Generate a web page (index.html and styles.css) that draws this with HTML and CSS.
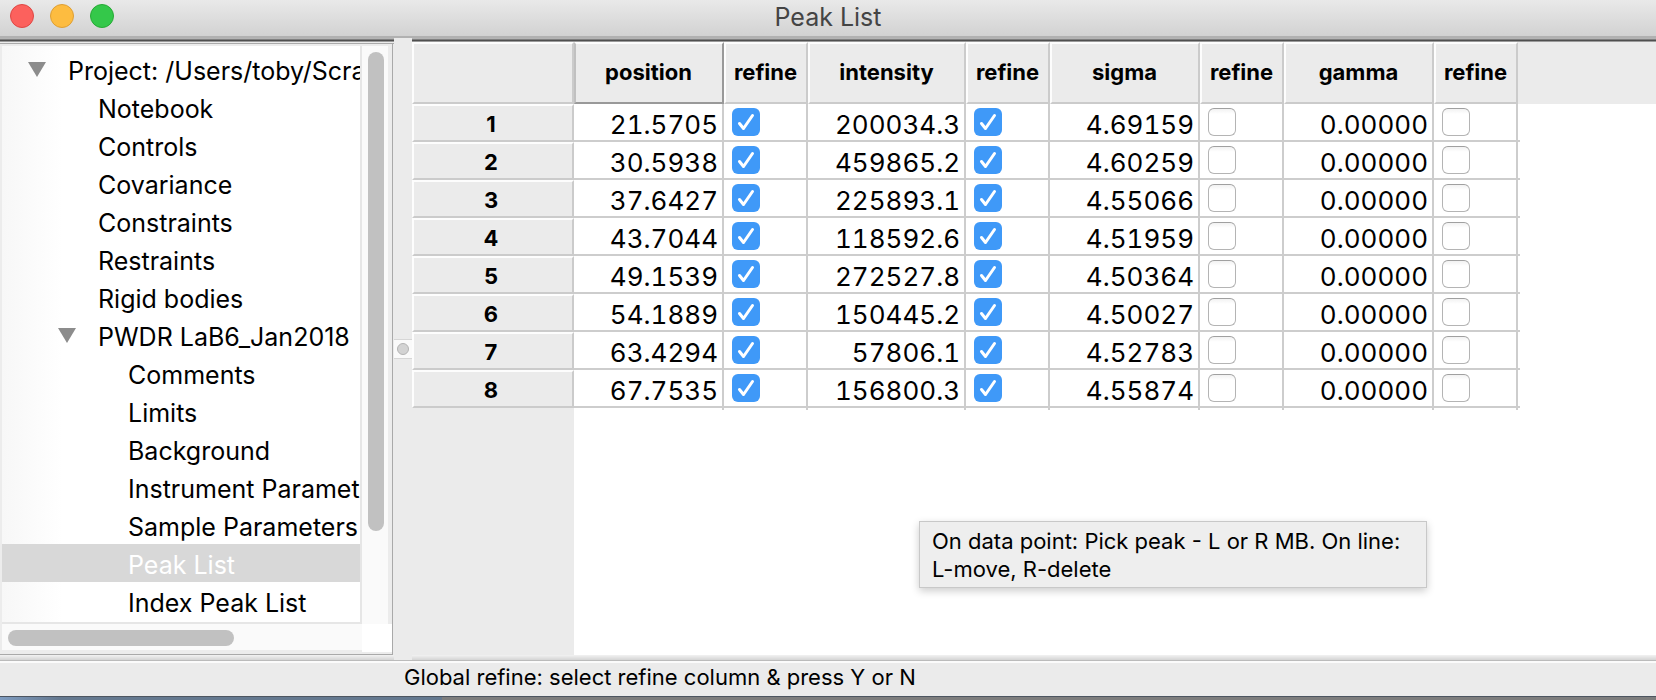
FILE: index.html
```html
<!DOCTYPE html>
<html lang="en">
<head>
<meta charset="utf-8">
<title>Peak List</title>
<link rel="stylesheet" href="styles.css">
</head>
<body>
<div class="window">
  <header class="titlebar">
    <div class="lights">
      <button class="light close" aria-label="Close"></button>
      <button class="light minimize" aria-label="Minimize"></button>
      <button class="light zoom" aria-label="Zoom"></button>
    </div>
    <h1 class="title">Peak List</h1>
  </header>
  <main class="content">
    <aside class="sidebar">
      <div class="tree-row">
        <ul class="tree">
          <li class="node"><svg class="arrow" viewBox="0 0 18 15"><path d="M0 0H18L9 15Z"/></svg>Project: /Users/toby/Scra</li>
          <li class="node level-1">Notebook</li>
          <li class="node level-1">Controls</li>
          <li class="node level-1">Covariance</li>
          <li class="node level-1">Constraints</li>
          <li class="node level-1">Restraints</li>
          <li class="node level-1">Rigid bodies</li>
          <li class="node level-1"><svg class="arrow" viewBox="0 0 18 15"><path d="M0 0H18L9 15Z"/></svg>PWDR LaB6_Jan2018</li>
          <li class="node level-2">Comments</li>
          <li class="node level-2">Limits</li>
          <li class="node level-2">Background</li>
          <li class="node level-2">Instrument Paramet</li>
          <li class="node level-2">Sample Parameters</li>
          <li class="node level-2 selected">Peak List</li>
          <li class="node level-2">Index Peak List</li>
        </ul>
        <div class="vtrack"><div class="vthumb"></div></div>
      </div>
      <div class="htrack-row">
        <div class="htrack"><div class="hthumb"></div></div>
        <div class="corner"></div>
      </div>
    </aside>
    <div class="splitter"><div class="grip"><span class="knob"></span></div></div>
    <section class="sheet">
      <table class="grid">
        <colgroup>
          <col class="col-label"><col class="col-value"><col class="col-refine"><col class="col-intensity"><col class="col-refine"><col class="col-value"><col class="col-refine"><col class="col-value"><col class="col-refine">
        </colgroup>
        <thead>
          <tr><td class="blank"></td><th class="current">position</th><th>refine</th><th>intensity</th><th>refine</th><th>sigma</th><th>refine</th><th>gamma</th><th>refine</th></tr>
        </thead>
        <tbody>
          <tr><th>1</th><td>21.5705</td><td class="tick"><input type="checkbox" aria-label="Refine position 1" checked></td><td>200034.3</td><td class="tick"><input type="checkbox" aria-label="Refine intensity 1" checked></td><td>4.69159</td><td class="tick"><input type="checkbox" aria-label="Refine sigma 1"></td><td>0.00000</td><td class="tick"><input type="checkbox" aria-label="Refine gamma 1"></td></tr>
          <tr><th>2</th><td>30.5938</td><td class="tick"><input type="checkbox" aria-label="Refine position 2" checked></td><td>459865.2</td><td class="tick"><input type="checkbox" aria-label="Refine intensity 2" checked></td><td>4.60259</td><td class="tick"><input type="checkbox" aria-label="Refine sigma 2"></td><td>0.00000</td><td class="tick"><input type="checkbox" aria-label="Refine gamma 2"></td></tr>
          <tr><th>3</th><td>37.6427</td><td class="tick"><input type="checkbox" aria-label="Refine position 3" checked></td><td>225893.1</td><td class="tick"><input type="checkbox" aria-label="Refine intensity 3" checked></td><td>4.55066</td><td class="tick"><input type="checkbox" aria-label="Refine sigma 3"></td><td>0.00000</td><td class="tick"><input type="checkbox" aria-label="Refine gamma 3"></td></tr>
          <tr><th>4</th><td>43.7044</td><td class="tick"><input type="checkbox" aria-label="Refine position 4" checked></td><td>118592.6</td><td class="tick"><input type="checkbox" aria-label="Refine intensity 4" checked></td><td>4.51959</td><td class="tick"><input type="checkbox" aria-label="Refine sigma 4"></td><td>0.00000</td><td class="tick"><input type="checkbox" aria-label="Refine gamma 4"></td></tr>
          <tr><th>5</th><td>49.1539</td><td class="tick"><input type="checkbox" aria-label="Refine position 5" checked></td><td>272527.8</td><td class="tick"><input type="checkbox" aria-label="Refine intensity 5" checked></td><td>4.50364</td><td class="tick"><input type="checkbox" aria-label="Refine sigma 5"></td><td>0.00000</td><td class="tick"><input type="checkbox" aria-label="Refine gamma 5"></td></tr>
          <tr><th>6</th><td>54.1889</td><td class="tick"><input type="checkbox" aria-label="Refine position 6" checked></td><td>150445.2</td><td class="tick"><input type="checkbox" aria-label="Refine intensity 6" checked></td><td>4.50027</td><td class="tick"><input type="checkbox" aria-label="Refine sigma 6"></td><td>0.00000</td><td class="tick"><input type="checkbox" aria-label="Refine gamma 6"></td></tr>
          <tr><th>7</th><td>63.4294</td><td class="tick"><input type="checkbox" aria-label="Refine position 7" checked></td><td>57806.1</td><td class="tick"><input type="checkbox" aria-label="Refine intensity 7" checked></td><td>4.52783</td><td class="tick"><input type="checkbox" aria-label="Refine sigma 7"></td><td>0.00000</td><td class="tick"><input type="checkbox" aria-label="Refine gamma 7"></td></tr>
          <tr><th>8</th><td>67.7535</td><td class="tick"><input type="checkbox" aria-label="Refine position 8" checked></td><td>156800.3</td><td class="tick"><input type="checkbox" aria-label="Refine intensity 8" checked></td><td>4.55874</td><td class="tick"><input type="checkbox" aria-label="Refine sigma 8"></td><td>0.00000</td><td class="tick"><input type="checkbox" aria-label="Refine gamma 8"></td></tr>
        </tbody>
      </table>
      <div class="below"></div>
      <div class="tooltip" role="tooltip">On data point: Pick peak - L or R MB. On line:<br>L-move, R-delete</div>
    </section>
  </main>
  <footer class="statusbar">Global refine: select refine column &amp; press Y or N</footer>
</div>
<div class="desktop"></div>
</body>
</html>
```

FILE: styles.css
```css
* { box-sizing: border-box; }

body {
  margin: 0;
  min-height: 100vh;
  display: flex;
  flex-direction: column;
  background: #ebebeb;
  color: #000;
  font-family: Inter, "Liberation Sans", sans-serif;
  font-size: 26px;
}

.window { flex: 1; display: flex; flex-direction: column; }

.titlebar {
  position: relative;
  display: flex;
  align-items: center;
  justify-content: center;
  height: 38px;
  padding-bottom: 2px;
  background: linear-gradient(#e9e9e9, #d2d2d2 36px);
  border-bottom: 2px solid #b1b1b1;
}
.title { margin: 0; font-size: 25px; font-weight: 400; line-height: 32px; color: #444; }
.lights { position: absolute; left: 10px; top: 4px; display: flex; gap: 16px; }
.light { width: 24px; height: 24px; padding: 0; border: 1px solid; border-radius: 50%; }
.close { background: #fc615d; border-color: #df4744; }
.minimize { background: #fdbc40; border-color: #de9f34; }
.zoom { background: #34c84a; border-color: #27aa35; }

.content {
  flex: 1;
  display: flex;
  background: linear-gradient(0deg, #d4d4d4, #f2f2f2 5px, #ebebeb 5px);
}

.sidebar {
  flex: none;
  display: flex;
  flex-direction: column;
  width: 394px;
  margin-bottom: 5px;
  border-top: 6px solid;
  border-image: linear-gradient(#b4b4b4 0 1px, #808080 1px 2px, #4f4f4f 2px 3px, #9a9a9a 3px 4px, #ebebeb 4px 5px, #aaa 5px) 6 0 0;
  background: #ececec;
  box-shadow: inset -1px 0 #ebebeb, inset -2px -1px #a9a9a9;
  padding: 2px 4px 3px 2px;
}
.tree-row { flex: 1; display: flex; }
.tree {
  flex: 1;
  min-width: 0;
  margin: 0;
  padding: 4px 0 2px;
  list-style: none;
  font-size: 25px;
  background: linear-gradient(90deg, #f7f7f7, #fff 60px);
  border-bottom: 2px solid #e6e6e6;
}
.node {
  display: flex;
  align-items: center;
  height: 38px;
  padding-top: 4px;
  padding-left: 66px;
  line-height: 34px;
  white-space: nowrap;
  overflow: hidden;
}
.level-1 { padding-left: 96px; }
.level-2 { padding-left: 126px; }
.selected { background: #d8d8d8; color: #fff; }
.arrow { flex: none; width: 18px; height: 15px; margin: 0 22px 4px -40px; fill: #8c8c8c; }

.vtrack { width: 30px; padding: 6px 6px 0; background: #fafafa; border-left: 2px solid #e6e6e6; border-right: 2px solid #ececec; }
.vthumb { width: 16px; height: 479px; border-radius: 8px; background: #c1c1c1; }
.htrack-row { display: flex; margin-right: -2px; }
.htrack { flex: 1; height: 28px; padding: 6px; background: #fafafa; border-bottom: 2px solid #ececec; }
.hthumb { width: 226px; height: 16px; border-radius: 8px; background: #c1c1c1; }
.corner { width: 30px; background: #fff; }

.splitter {
  flex: none;
  display: flex;
  flex-direction: column;
  width: 18px;
  padding-top: 301px;
  background: #ebebeb;
}
.grip {
  display: flex;
  align-items: center;
  justify-content: center;
  height: 20px;
  background: #fafafa;
  border: solid #d6d6d6;
  border-width: 1px 0;
}
.knob { width: 12px; height: 12px; border-radius: 50%; background: #d3d3d3; border: 1px solid #b4b4b4; }

.sheet {
  position: relative;
  flex: 1;
  display: flex;
  flex-direction: column;
  align-items: flex-start;
  min-width: 0;
  background: linear-gradient(#ebebeb 62px, #fff 62px);
  border-top: 4px solid;
  border-image: linear-gradient(#b4b4b4 0 1px, #808080 1px 2px, #4f4f4f 2px 3px, #9a9a9a 3px) 4 0 0;
  margin-bottom: 5px;
}
.grid { table-layout: fixed; width: 1106px; border-collapse: separate; border-spacing: 0; }
.col-label { width: 162px; }
.col-value { width: 150px; }
.col-refine { width: 84px; }
.col-intensity { width: 158px; }
.grid th, .blank {
  padding: 2px 4px 0 0;
  background: #ebebeb;
  border: 2px solid;
  border-color: #fdfdfd #cbcbcb #cbcbcb #fdfdfd;
  font-size: 22px;
  font-weight: 700;
  text-align: center;
}
.grid thead th, .grid .blank { height: 62px; padding: 0 1px 2px 0; }
.grid thead .current { border-color: #fdfdfd #999 #999 #c0c0c0; }
.grid tbody td {
  position: relative;
  height: 38px;
  padding: 6px 4px 0 0;
  background: #fff;
  border: solid #cdcdcd;
  border-width: 0 2px 2px 0;
  font-variant-numeric: tabular-nums;
  line-height: 30px;
  text-align: right;
}
.grid tbody .tick { padding: 4px 0 0 8px; text-align: left; vertical-align: top; }

/* Grid lines run slightly past the last column and the last row. */
.grid tbody td:last-child::before,
.grid tbody tr:last-child td::after {
  content: "";
  position: absolute;
  background: #cdcdcd;
}
.grid tbody td:last-child::before { right: -4px; bottom: -2px; width: 2px; height: 2px; }
.grid tbody tr:last-child td::after { right: -2px; bottom: -4px; width: 2px; height: 2px; }

.tick input {
  appearance: none;
  display: block;
  width: 28px;
  height: 28px;
  margin: 0;
  border: 1px solid #b4b4b4;
  border-top-color: #a0a0a0;
  border-radius: 6px;
  background: linear-gradient(#f2f2f2, #fff 5px);
}
.tick input:checked {
  border: 0;
  background: #3f99f8 url("data:image/svg+xml,%3Csvg xmlns='http://www.w3.org/2000/svg' viewBox='0 0 28 28'%3E%3Cpath d='M7.500 15.500L11.500 20.500L20.500 7.500' fill='none' stroke='white' stroke-width='3' stroke-linecap='round' stroke-linejoin='round'/%3E%3C/svg%3E");
}
.below { flex: 1; width: 162px; background: #ebebeb; }

.tooltip {
  position: absolute;
  left: 507px;
  top: 479px;
  width: 508px;
  padding: 5px 12px 4px;
  background: #eee;
  border: 1px solid #c8c8c8;
  box-shadow: 0 3px 8px rgba(0, 0, 0, .2);
  font-size: 22px;
  line-height: 28px;
  white-space: nowrap;
}

.statusbar {
  height: 36px;
  padding-left: 404px;
  border-top: 1px solid #bbb;
  box-shadow: inset 0 2px #fbfbfb;
  background: #ebebeb;
  font-size: 22px;
  line-height: 32px;
}
.desktop {
  height: 4px;
  border-top: 1px solid #4d5560;
  background: linear-gradient(90deg, #7f9cc0, #64788f 60px 442px, #7d7d7d 442px);
}
```
